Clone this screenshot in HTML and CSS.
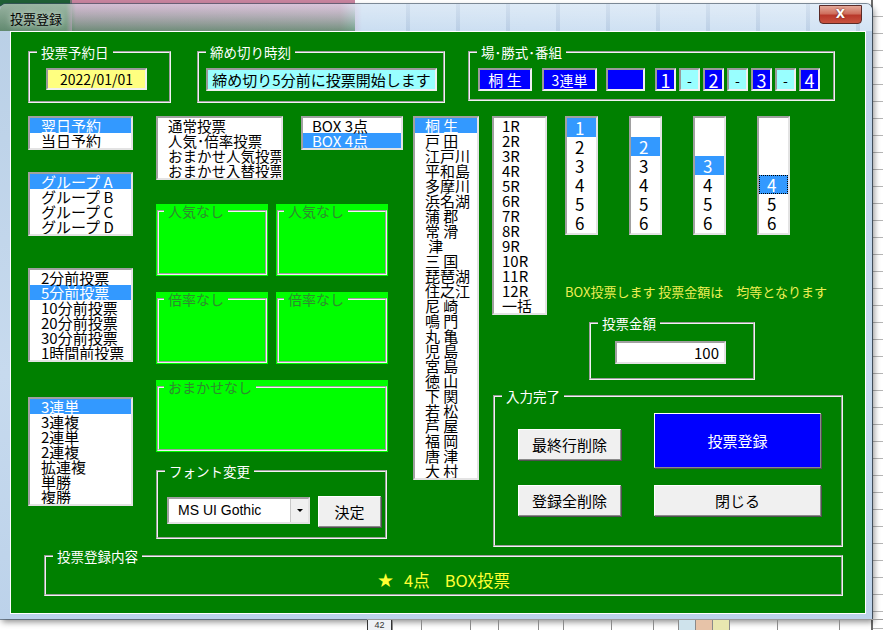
FILE: index.html
```html
<!DOCTYPE html>
<html lang="ja">
<head>
<meta charset="utf-8">
<title>投票登録</title>
<link rel="stylesheet" href="styles.css">
</head>
<body>
<div class="window">
  <div class="titlebar">
    <span class="title">投票登録</span>
    <span class="close">X</span>
  </div>
  <div class="client">
    <div class="toprow">
      <fieldset class="grp g-date">
        <legend>投票予約日</legend>
        <div class="fld yellow">2022/01/01</div>
      </fieldset>
      <fieldset class="grp g-dead">
        <legend>締め切り時刻</legend>
        <div class="fld cyan">締め切り5分前に投票開始します</div>
      </fieldset>
      <fieldset class="grp g-place">
        <legend>場･勝式･番組</legend>
        <div class="pbox">
          <div class="fld blue pb1">桐 生</div>
          <div class="fld blue pb2">3連単</div>
          <div class="fld blue pb3"></div>
          <div class="fld blue pn first">1</div>
          <div class="fld cyan pn">-</div>
          <div class="fld blue pn">2</div>
          <div class="fld cyan pn">-</div>
          <div class="fld blue pn">3</div>
          <div class="fld cyan pn">-</div>
          <div class="fld blue pn">4</div>
        </div>
      </fieldset>
    </div>

    <div class="main">
      <div class="col-a">
        <div class="list l1">
          <div class="sel">翌日予約</div>
          <div>当日予約</div>
        </div>
        <div class="list l2">
          <div class="sel">グループ A</div>
          <div>グループ B</div>
          <div>グループ C</div>
          <div>グループ D</div>
        </div>
        <div class="list l3">
          <div>2分前投票</div>
          <div class="sel">5分前投票</div>
          <div>10分前投票</div>
          <div>20分前投票</div>
          <div>30分前投票</div>
          <div>1時間前投票</div>
        </div>
        <div class="list l4">
          <div class="sel">3連単</div>
          <div>3連複</div>
          <div>2連単</div>
          <div>2連複</div>
          <div>拡連複</div>
          <div>単勝</div>
          <div>複勝</div>
        </div>
      </div>

      <div class="col-b">
        <div class="row-b1">
          <div class="list l-mode">
            <div>通常投票</div>
            <div>人気･倍率投票</div>
            <div>おまかせ人気投票</div>
            <div>おまかせ入替投票</div>
          </div>
          <div class="list l-box">
            <div>BOX 3点</div>
            <div class="sel">BOX 4点</div>
          </div>
        </div>
        <div class="limes">
          <div class="lime"><fieldset class="lgrp"><legend>人気なし</legend></fieldset></div>
          <div class="lime"><fieldset class="lgrp"><legend>人気なし</legend></fieldset></div>
        </div>
        <div class="limes limes2">
          <div class="lime"><fieldset class="lgrp"><legend>倍率なし</legend></fieldset></div>
          <div class="lime"><fieldset class="lgrp"><legend>倍率なし</legend></fieldset></div>
        </div>
        <div class="lime omakase"><fieldset class="lgrp"><legend>おまかせなし</legend></fieldset></div>
        <fieldset class="grp g-font">
          <legend>フォント変更</legend>
          <div class="fontrow">
            <div class="combo"><span class="ctext">MS UI Gothic</span><span class="dd"><i class="tri"></i></span></div>
            <div class="btn b-ok">決定</div>
          </div>
        </fieldset>
      </div>

      <div class="list venue">
        <div class="sel">桐 生</div>
        <div>戸 田</div>
        <div>江戸川</div>
        <div>平和島</div>
        <div>多摩川</div>
        <div>浜名湖</div>
        <div>蒲 郡</div>
        <div>常 滑</div>
        <div> 津</div>
        <div>三 国</div>
        <div>琵琶湖</div>
        <div>住之江</div>
        <div>尼 崎</div>
        <div>鳴 門</div>
        <div>丸 亀</div>
        <div>児 島</div>
        <div>宮 島</div>
        <div>徳 山</div>
        <div>下 関</div>
        <div>若 松</div>
        <div>芦 屋</div>
        <div>福 岡</div>
        <div>唐 津</div>
        <div>大 村</div>
      </div>

      <div class="col-d">
        <div class="d-top">
          <div class="list race">
            <div>1R</div><div>2R</div><div>3R</div><div>4R</div><div>5R</div><div>6R</div>
            <div>7R</div><div>8R</div><div>9R</div><div>10R</div><div>11R</div><div>12R</div>
            <div>一括</div>
          </div>
          <div class="d-right">
            <div class="nums">
              <div class="list num">
                <div class="sel">1</div><div>2</div><div>3</div><div>4</div><div>5</div><div>6</div>
              </div>
              <div class="list num">
                <div></div><div class="sel">2</div><div>3</div><div>4</div><div>5</div><div>6</div>
              </div>
              <div class="list num">
                <div></div><div></div><div class="sel">3</div><div>4</div><div>5</div><div>6</div>
              </div>
              <div class="list num">
                <div></div><div></div><div></div><div class="sel focus">4</div><div>5</div><div>6</div>
              </div>
            </div>
            <div class="note">BOX投票します 投票金額は　均等となります</div>
            <fieldset class="grp g-amount">
              <legend>投票金額</legend>
              <div class="amount">100</div>
            </fieldset>
          </div>
        </div>
        <fieldset class="grp g-done">
          <legend>入力完了</legend>
          <div class="done">
            <div class="done-c1">
              <div class="btn b-sm">最終行削除</div>
              <div class="btn b-sm">登録全削除</div>
            </div>
            <div class="done-c2">
              <div class="btn b-big">投票登録</div>
              <div class="btn b-wide">閉じる</div>
            </div>
          </div>
        </fieldset>
      </div>
    </div>

    <fieldset class="grp g-content">
      <legend>投票登録内容</legend>
      <div class="content-text"><span class="star">★</span><span class="pts">4点</span><span>BOX投票</span></div>
    </fieldset>
  </div>
</div>
<div class="sheet">
  <span class="hdr">42</span>
  <span style="width:29px"></span>
  <span style="width:49px"></span>
  <span style="width:28px"></span>
  <span style="width:40px"></span>
  <span style="width:25px"></span>
  <span style="width:48px"></span>
  <span style="width:42px"></span>
  <span style="width:25px"></span>
  <span class="c-blue" style="width:17px"></span>
  <span class="c-orange" style="width:17px"></span>
  <span class="c-yellow" style="width:17px"></span>
  <span style="width:48px"></span>
  <span style="width:62px"></span>
  <span style="width:44px"></span>
</div>
</body>
</html>
```
FILE: styles.css
```css
* { box-sizing: border-box; }
html, body { margin: 0; padding: 0; }
body {
  width: 883px;
  height: 630px;
  overflow: hidden;
  font-family: "MS UI Gothic", "Noto Sans CJK JP", "Noto Sans", sans-serif;
  color: #000;
  background:
    linear-gradient(to right, #1f5f35 0 70px, #777 70px 72px, #c9849f 72px 355px, transparent 355px) 0 0 / 100% 6px no-repeat,
    linear-gradient(to right, #6b6b6b 0 2px, transparent 2px) 871px 0 / 12px 100% no-repeat,
    repeating-linear-gradient(to bottom, #fff 0 16px, #b5b5b5 16px 17px) 872px 0 / 11px 100% no-repeat,
    #fff;
}

/* ---------- window frame ---------- */
.window {
  width: 872px;
  height: 615px;
  margin-top: 4px;
  border-radius: 6px 6px 0 0;
  background: linear-gradient(to bottom, #b9cfe6, #c7daee 60%, #bcd2ea);
  box-shadow: 0 0 0 1px rgba(60, 80, 100, .65), 2px 3px 6px rgba(0, 0, 0, .45);
  display: flex;
  flex-direction: column;
}
.titlebar {
  height: 27px;
  display: flex;
  align-items: flex-start;
  justify-content: space-between;
  padding: 0 10px 0 10px;
  border-radius: 6px 6px 0 0;
  background:
    linear-gradient(to bottom, rgba(255,255,255,.40), rgba(255,255,255,.08)),
    linear-gradient(to bottom, rgba(0,0,0,0), rgba(40,120,60,.6)) 72px 0 / 283px 100% no-repeat,
    repeating-linear-gradient(to right, transparent 0 46px, rgba(120,150,190,.25) 46px 50px) 360px 0 / 520px 100% no-repeat,
    linear-gradient(to right, #547f63 0, #5d8a6b 66px, #b790b5 76px, #c29dc2 340px, #c6dbf0 362px, #cfe1f3 100%);
}
.title {
  font-size: 13px;
  line-height: 14px;
  margin-top: 8px;
  color: #000;
  text-shadow: 0 0 6px rgba(255,255,255,.9);
}
.close {
  width: 43px;
  height: 19px;
  margin-top: 1px;
  border: 1px solid #5a2a26;
  border-radius: 0 0 4px 4px;
  background: linear-gradient(to bottom, #e4a898 0, #cf6f5e 45%, #b9382b 55%, #c8523f 100%);
  color: #fff;
  font-family: "DejaVu Sans", sans-serif;
  font-weight: bold;
  font-size: 12px;
  line-height: 17px;
  text-align: center;
  text-shadow: 0 0 2px #5a1a10;
}

.client {
  margin: 0 6px 0 10px;
  height: 583px;
  border: 1px solid #fff;
  background: #008000;
  padding: 13px 0 0 17px;
}

/* ---------- generic group box ---------- */
.grp {
  margin: 0;
  padding: 0;
  min-width: 0;
  border: 2px groove #f2f2f2;
}
.grp > legend {
  margin-left: 7px;
  padding: 0 4px;
  font-size: 13.5px;
  line-height: 14px;
  color: #fff;
}

.fld {
  border: 2px solid;
  border-color: #9a9a9a #f0f0f0 #f0f0f0 #9a9a9a;
  display: flex;
  align-items: center;
  justify-content: center;
  white-space: pre;
}
.yellow { background: #ffff80; }
.cyan { background: #99ffff; }
.blue { background: #0000ff; color: #fff; }

/* ---------- top row ---------- */
.toprow { display: flex; align-items: flex-start; }
.g-date { width: 143px; height: 58px; }
.g-date .fld { width: 101px; height: 22px; margin: 9px 0 0 16px; font-size: 14px; }
.g-dead { width: 248px; height: 58px; margin-left: 26px; }
.g-dead .fld { width: 231px; height: 23px; margin: 9px 0 0 7px; font-size: 15px; }
.g-place { width: 367px; height: 56px; margin-left: 23px; }
.pbox { display: flex; margin: 9px 0 0 8px; }
.pbox .fld { height: 23px; }
.pb1 { width: 54px; font-size: 15px; }
.pb2 { width: 55px; margin-left: 10px; font-size: 14px; }
.pb3 { width: 39px; margin-left: 9px; }
.pn { width: 21px; margin-left: 3px; font-size: 18px; }
.pn.first { margin-left: 10px; }
.pn.cyan { font-size: 14px; }

/* ---------- list boxes ---------- */
.list {
  background: #fff;
  border: 2px solid;
  border-color: #a0a0a0 #e3e3e3 #e3e3e3 #a0a0a0;
  font-size: 15px;
  line-height: 15px;
  overflow: hidden;
}
.list > div { height: 15px; padding-left: 10px; white-space: pre; }
.list > .sel { background: #3399ff; color: #fff; }

.main { display: flex; align-items: flex-start; margin-top: 13px; }

.col-a { width: 105px; display: flex; flex-direction: column; }
.l2 { margin-top: 22px; }
.l3 { margin-top: 32px; }
.l4 { margin-top: 35px; }
.col-a .list > div { padding-left: 11px; }

.col-b { width: 248px; margin-left: 23px; display: flex; flex-direction: column; }
.row-b1 { display: flex; align-items: flex-start; }
.l-mode { width: 127px; font-size: 14.5px; }
.l-box { width: 102px; margin-left: 18px; }
.l-box > div { padding-left: 9px; }

.limes { display: flex; gap: 8px; margin-top: 24px; }
.limes2 { margin-top: 16px; }
.lime {
  width: 112px;
  height: 72px;
  background: #00ff00;
  padding: 0 1px 1px 1px;
  display: flex;
}
.lgrp {
  flex: 1;
  margin: 0;
  padding: 0;
  min-width: 0;
  border: 2px groove #f2f2f2;
}
.lgrp > legend {
  margin-left: 5px;
  padding: 0 4px;
  font-size: 14px;
  line-height: 14px;
  color: #2f8a2f;
}
.omakase { width: 232px; margin-top: 16px; }

.g-font { width: 231px; height: 75px; margin-top: 12px; }
.fontrow { display: flex; align-items: flex-start; margin: 19px 0 0 9px; }
.combo {
  width: 143px;
  height: 27px;
  background: #fff;
  border: 2px solid;
  border-color: #a0a0a0 #e3e3e3 #e3e3e3 #a0a0a0;
  display: flex;
}
.ctext {
  flex: 1;
  padding-left: 9px;
  font-family: "Liberation Sans", "Noto Sans", sans-serif;
  font-size: 14px;
  line-height: 23px;
}
.dd {
  width: 18px;
  background: #f0f0f0;
  border-left: 1px solid #c8c8c8;
  display: flex;
  align-items: center;
  justify-content: center;
}
.tri {
  width: 0;
  height: 0;
  border-left: 3px solid transparent;
  border-right: 3px solid transparent;
  border-top: 3px solid #000;
}

.btn {
  background: #f0f0f0;
  border: 1px solid;
  border-color: #fff #8a8a8a #8a8a8a #fff;
  box-shadow: 1px 1px 0 #505050;
  display: flex;
  align-items: center;
  justify-content: center;
  font-size: 15px;
  color: #000;
}
.b-ok { width: 63px; height: 31px; margin: -1px 0 0 8px; }

.venue { width: 66px; height: 364px; margin-left: 9px; }

.col-d { width: 351px; margin-left: 13px; }
.d-top { display: flex; align-items: flex-start; }
.race { width: 55px; }
.race > div { padding-left: 8px; }
.d-right { margin-left: 18px; display: flex; flex-direction: column; }
.nums { display: flex; gap: 31px; }
.num { width: 33px; height: 119px; font-size: 17px; line-height: 19px; }
.num > div { height: 19px; padding-left: 8px; }
.num > .focus { outline: 1px dotted #000; outline-offset: -1px; }

.note {
  margin-top: 49px;
  color: #eeee55;
  font-size: 13px;
  line-height: 16px;
  white-space: nowrap;
}
.g-amount { width: 166px; height: 64px; margin: 16px 0 0 24px; }
.amount {
  width: 111px;
  height: 23px;
  margin: 11px 0 0 24px;
  background: #fff;
  border: 2px solid;
  border-color: #a0a0a0 #e3e3e3 #e3e3e3 #a0a0a0;
  text-align: right;
  padding-right: 5px;
  font-size: 15px;
  line-height: 19px;
}

.g-done { width: 350px; height: 158px; margin: 9px 0 0 1px; }
.done { display: flex; margin-left: 23px; }
.done-c1 { width: 103px; margin-top: 26px; display: flex; flex-direction: column; gap: 25px; }
.done-c2 { width: 167px; margin: 10px 0 0 33px; display: flex; flex-direction: column; gap: 17px; }
.b-sm { height: 31px; }
.b-big { height: 55px; background: #0000ff; color: #fff; }
.b-wide { height: 31px; }

.g-content { width: 799px; height: 47px; margin: 2px 0 0 16px; }
.content-text {
  margin-top: 8px;
  display: flex;
  justify-content: center;
  align-items: center;
  color: #ffff33;
  font-size: 16.5px;
  line-height: 18px;
}
.star { font-family: "DejaVu Sans", sans-serif; font-size: 19px; }
.pts { margin: 0 15px 0 10px; }

/* ---------- spreadsheet strip below ---------- */
.sheet {
  height: 11px;
  margin-left: 367px;
  display: flex;
  border-top: 1px solid #9a9a9a;
}
.sheet > span {
  height: 100%;
  border-left: 1px solid #8a8a8a;
}
.sheet .hdr {
  width: 25px;
  border-left: 1px solid #333;
  border-right: 1px solid #333;
  background: #eef1f5;
  font-family: "Liberation Sans", sans-serif;
  font-size: 9px;
  line-height: 10px;
  text-align: center;
  color: #333;
}
.c-blue { background: #cfe3ec; }
.c-orange { background: #e7c3a8; }
.c-yellow { background: #e9e7b0; }
```
